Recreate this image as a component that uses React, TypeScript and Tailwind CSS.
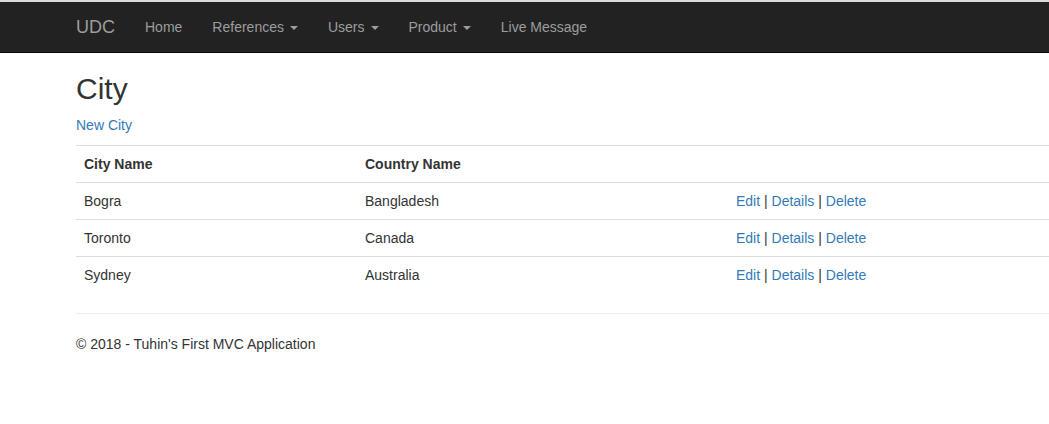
import React from "react";

const cities = [
  { city: "Bogra", country: "Bangladesh" },
  { city: "Toronto", country: "Canada" },
  { city: "Sydney", country: "Australia" },
];

function Caret() {
  return (
    <span className="ml-[6px] inline-block h-0 w-0 align-middle border-x-[4px] border-t-[4px] border-x-transparent border-t-[#9d9d9d]" />
  );
}

const navItems: { label: string; dropdown?: boolean }[] = [
  { label: "Home" },
  { label: "References", dropdown: true },
  { label: "Users", dropdown: true },
  { label: "Product", dropdown: true },
  { label: "Live Message" },
];

export default function App() {
  return (
    <div
      className="h-[424px] w-full overflow-hidden bg-white text-[14px] leading-[20px] text-[#333]"
      style={{ fontFamily: '"Liberation Sans", Arial, sans-serif' }}
    >
      <div className="h-[2px] bg-[#dcdcdc]" />
      <nav className="h-[51px] border-b border-[#080808] bg-[#222]">
        <div className="ml-[61px] flex w-[1170px] px-[15px]">
          <a className="-ml-[15px] h-[50px] px-[15px] py-[15px] text-[18px] leading-[20px] text-[#9d9d9d]">
            UDC
          </a>
          <ul className="flex">
            {navItems.map((item) => (
              <li key={item.label}>
                <a className="block px-[15px] py-[15px] text-[14px] leading-[20px] text-[#9d9d9d]">
                  {item.label}
                  {item.dropdown && <Caret />}
                </a>
              </li>
            ))}
          </ul>
        </div>
      </nav>

      <div className="ml-[61px] w-[1170px] px-[15px]">
        <h2 className="mt-[19px] mb-[10px] text-[30px] leading-[33px] font-normal">City</h2>
        <p className="mb-[10px]">
          <a className="text-[#337ab7]">New City</a>
        </p>
        <table className="mb-[20px] w-full border-collapse">
          <tbody>
            <tr>
              <th className="w-[281px] border-t border-[#ddd] p-[8px] text-left font-bold">City Name</th>
              <th className="w-[371px] border-t border-[#ddd] p-[8px] text-left font-bold">Country Name</th>
              <th className="border-t border-[#ddd] p-[8px]" />
            </tr>
            {cities.map((c) => (
              <tr key={c.city}>
                <td className="border-t border-[#ddd] p-[8px]">{c.city}</td>
                <td className="border-t border-[#ddd] p-[8px]">{c.country}</td>
                <td className="border-t border-[#ddd] p-[8px]">
                  <a className="text-[#337ab7]">Edit</a> | <a className="text-[#337ab7]">Details</a> |{" "}
                  <a className="text-[#337ab7]">Delete</a>
                </td>
              </tr>
            ))}
          </tbody>
        </table>
        <hr className="mt-[20px] mb-[20px] border-t border-[#eee]" />
        <footer>
          <p>© 2018 - Tuhin's First MVC Application</p>
        </footer>
      </div>
    </div>
  );
}
